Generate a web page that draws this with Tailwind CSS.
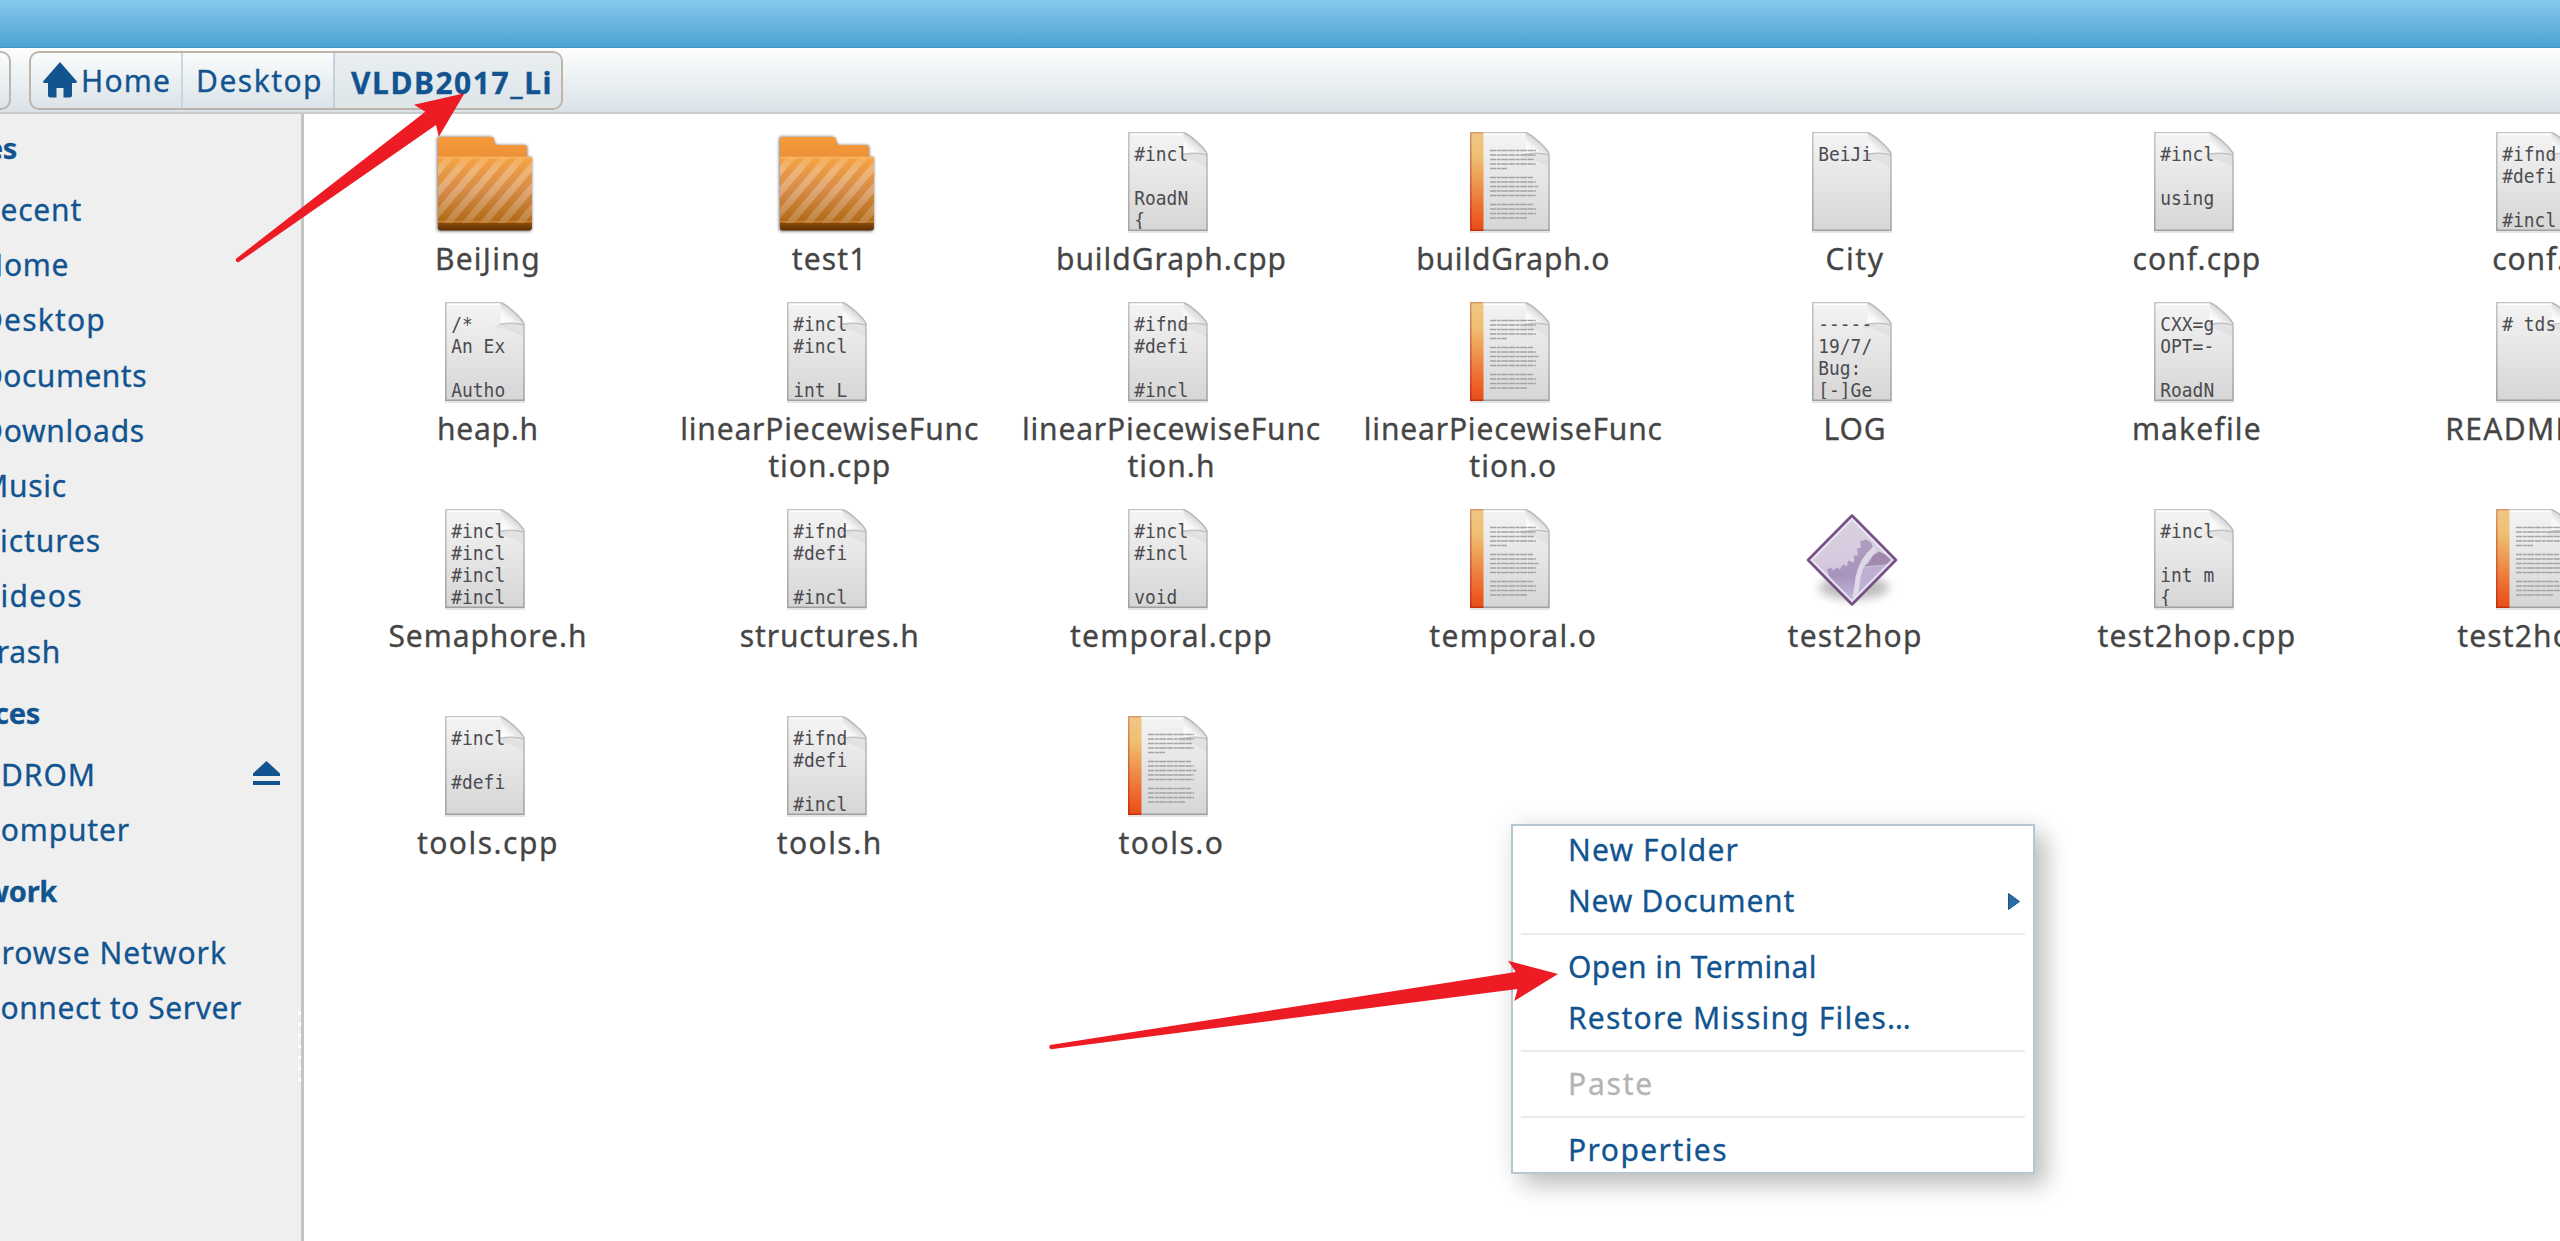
<!DOCTYPE html>
<html lang="en">
<head>
<meta charset="utf-8">
<title>VLDB2017_Li</title>
<script src="https://cdn.jsdelivr.net/npm/@tailwindcss/browser@4"></script>
</head>
<body class="relative flex h-[1241px] w-[2560px] flex-col overflow-hidden bg-white font-['Noto_Sans',sans-serif] text-[30px] text-[#12548f] [-webkit-text-stroke:0.3px]">

<!-- shared gradients and symbols -->
<svg class="absolute size-0" aria-hidden="true">
  <defs>
    <linearGradient id="paper" x1="0" y1="0" x2="0" y2="1"><stop offset="0" stop-color="#f4f4f4"/><stop offset="1" stop-color="#d6d6d6"/></linearGradient>
    <linearGradient id="edge" x1="0" y1="0" x2="0" y2="1"><stop offset="0" stop-color="#c4c4c4"/><stop offset="1" stop-color="#a0a0a0"/></linearGradient>
    <linearGradient id="fold" x1="0" y1="1" x2="0.75" y2="0.25"><stop offset="0" stop-color="#ffffff"/><stop offset="0.4" stop-color="#f8f8f8"/><stop offset="1" stop-color="#c4c4c4"/></linearGradient>
    <linearGradient id="spine" x1="0" y1="0" x2="0" y2="1"><stop offset="0" stop-color="#f0c78a"/><stop offset="0.25" stop-color="#efc070"/><stop offset="0.9" stop-color="#ec5820"/><stop offset="1" stop-color="#e4501c"/></linearGradient>
    <linearGradient id="spineEdge" x1="0" y1="0" x2="0" y2="1"><stop offset="0" stop-color="#dc9a6a"/><stop offset="1" stop-color="#c8300c"/></linearGradient>
    <linearGradient id="front" x1="0" y1="0" x2="0" y2="1"><stop offset="0" stop-color="#f7a444"/><stop offset="0.5" stop-color="#d58b48"/><stop offset="1" stop-color="#ad6712"/></linearGradient>
    <linearGradient id="back" x1="0" y1="0" x2="0" y2="1"><stop offset="0" stop-color="#f79a3e"/><stop offset="1" stop-color="#e98f33"/></linearGradient>
    <linearGradient id="base" x1="0" y1="0" x2="0" y2="1"><stop offset="0" stop-color="#8a4c08"/><stop offset="1" stop-color="#5c2f04"/></linearGradient>
    <linearGradient id="stripe" x1="0" y1="0" x2="0" y2="1"><stop offset="0" stop-color="#fff" stop-opacity="0.12"/><stop offset="0.2" stop-color="#fff" stop-opacity="0.28"/><stop offset="1" stop-color="#fff" stop-opacity="0.18"/></linearGradient>
    <linearGradient id="gem" x1="0" y1="0" x2="0" y2="1"><stop offset="0" stop-color="#d8cfe0"/><stop offset="0.5" stop-color="#d6cbde"/><stop offset="1" stop-color="#bdaed4"/></linearGradient>
    <linearGradient id="gear" x1="0" y1="0" x2="0" y2="1"><stop offset="0" stop-color="#b09dbd"/><stop offset="0.55" stop-color="#a893bd"/><stop offset="1" stop-color="#c9bfe4"/></linearGradient>
    <clipPath id="page"><rect x="0" y="0" width="61" height="97"/></clipPath>
    <clipPath id="frontClip"><path d="M8.5 25h94v66h-94z"/></clipPath>
    <clipPath id="gemClip"><path d="M55 5 97 46.5 55 88 13 46.5z"/></clipPath>
    <filter id="soft" x="-30%" y="-60%" width="160%" height="220%"><feGaussianBlur stdDeviation="5"/></filter>
    <filter id="soft2" x="-10%" y="-10%" width="120%" height="120%"><feGaussianBlur stdDeviation="1.4"/></filter>
  </defs>
  <symbol id="sheet" viewBox="0 0 84 104" overflow="visible">
    <path d="M0 100h80" stroke="#000" stroke-opacity="0.1" stroke-width="2"/>
    <path d="M.8.8H56C62 3 77 16 79 22V98.2H.8z" fill="url(#paper)" stroke="url(#edge)" stroke-width="1.5"/>
    <path d="M2.3 2.3H55" stroke="#fff" stroke-width="1.5"/>
    <path d="M53 22C60 23 74 23 78.500 24V36C72 30 60 26 50 26z" fill="#000" fill-opacity="0.04"/>
    <path d="M55.500 1.2C60 3 76 15 78.600 22C73 20 62 20.5 55 21.5C56 14 56 8 55.500 1.2z" fill="url(#fold)"/>
    <path d="M54.500 22.300C62 21.3 73 21 78.600 23" fill="none" stroke="#a8a8a8" stroke-opacity=".6" stroke-width="1.6"/>
    <path d="M56 1C62 3 77 16 79 22" fill="none" stroke="#bcbcbc" stroke-width="1.4"/>
  </symbol>
</svg>

<!-- title bar -->
<header class="h-12 shrink-0 border-b border-[#4294c6] bg-linear-to-b from-[#86c9ec] to-[#4aa3d4]"></header>

<!-- location bar -->
<nav class="flex h-[66px] shrink-0 items-start border-b-2 border-[#c6cbcd] bg-linear-to-b from-[#fdfefe] to-[#d9e2e7] pt-[3px]">
  <div class="h-[59px] w-[11px] rounded-r-[10px] border-2 border-l-0 border-[#bdb5ac]"></div>
  <div class="ml-[18px] flex h-[59px] w-[534px] overflow-hidden rounded-[10px] border-2 border-[#bdb5ac] leading-[55px]">
    <div class="flex w-[152px] items-start border-r-2 border-[#cad7de] pl-3">
      <svg class="mt-[9px] h-[36px] w-[34px] shrink-0" viewBox="0 0 34 36" fill="#12548f"><path d="M17 0 34 19.500Q34 21 32 21H29V33Q29 35.500 26.500 35.500H20.500V26H13.500V35.500H7.500Q5 35.500 5 33V21H2Q0 21 0 19.500z"/></svg>
      <span class="ml-1 whitespace-nowrap" data-w="90">Home</span>
    </div>
    <div class="w-[152px] border-r-2 border-[#c3d2da] pl-[13px]"><span class="whitespace-nowrap" data-w="127">Desktop</span></div>
    <div class="flex-1 bg-[#dfe6ea]/60 pl-[16px] pt-0.5 font-bold"><span class="whitespace-nowrap" data-w="202" data-bold>VLDB2017_Li</span></div>
  </div>
</nav>

<div class="flex min-h-0 flex-1">
  <!-- places -->
  <aside class="relative w-[304px] shrink-0 overflow-hidden border-r-[3px] border-[#c4c4c4] bg-[#efefef] leading-[55.2px]" id="places"></aside>
  <!-- files -->
  <main class="min-w-0 flex-1 overflow-hidden bg-white">
    <div id="files" class="ml-[12px] mt-[18px] grid w-[2393px] grid-cols-[repeat(7,341.8px)] grid-rows-[170px_207.200px_207.200px_170px] text-[#454545]"></div>
  </main>
</div>

<!-- context menu -->
<div class="absolute left-[1511px] top-[824px] flex h-[350px] w-[524px] flex-col border-2 border-[#b5c8d2] bg-white leading-[51px] shadow-[12px_12px_22px_rgba(0,0,0,0.22),0_0_26px_rgba(0,0,0,0.08)]">
  <div class="h-[49px] shrink-0 leading-[48px] pl-[55px]"><span class="whitespace-nowrap" data-w="171">New Folder</span></div>
  <div class="flex h-[51px] shrink-0 items-center justify-between pl-[55px] pr-[13px]"><span class="whitespace-nowrap" data-w="227">New Document</span>
    <svg class="mt-0.5 h-[17px] w-[12px]" viewBox="0 0 12 17"><path d="M.5.5 11.5 8.5.5 16.5z" fill="#2d6ba3" stroke="#12548f"/></svg></div>
  <div class="mx-2 my-[6.500px] h-0.5 shrink-0 bg-[#e4ecf0]"></div>
  <div class="h-[51px] shrink-0 pl-[55px]"><span class="whitespace-nowrap" data-w="249">Open in Terminal</span></div>
  <div class="h-[51px] shrink-0 pl-[55px]"><span class="whitespace-nowrap" data-w="344">Restore Missing Files…</span></div>
  <div class="mx-2 my-[6.500px] h-0.5 shrink-0 bg-[#e4ecf0]"></div>
  <div class="h-[51px] shrink-0 pl-[55px] text-[#b4b4b4]"><span class="whitespace-nowrap" data-w="86">Paste</span></div>
  <div class="mx-2 my-[6.500px] h-0.5 shrink-0 bg-[#e4ecf0]"></div>
  <div class="h-[48px] shrink-0 pl-[55px]"><span class="whitespace-nowrap" data-w="160">Properties</span></div>
</div>

<!-- red pointers -->
<svg class="pointer-events-none absolute left-0 top-0 h-[1241px] w-[2560px]" viewBox="0 0 2560 1241" fill="#ed1c24">
  <path d="M464.500 93.300 414 104.700 425.300 111.700 236 258.700Q235 262.500 238.500 262.300L436 125 438.800 136.700z"/>
  <path d="M1558 974 1508 960.700 1515.700 972 1050 1045Q1048 1048 1051 1049.200L1517.500 989 1514.300 1001z"/>
</svg>

<script>
const places = [
  ['h', 'Places', 17],
  ['i', 'Recent', 82], ['i', 'Home', 69], ['i', 'Desktop', 106], ['i', 'Documents', 147], ['i', 'Downloads', 145],
  ['i', 'Music', 67], ['i', 'Pictures', 101], ['i', 'Videos', 83], ['i', 'Trash', 61],
  ['h', 'Devices', 40],
  ['e', 'CDROM', 96], ['i', 'Computer', 130],
  ['h', 'Network', 57],
  ['i', 'Browse Network', 227], ['i', 'Connect to Server', 242],
];
const eject = '<svg class="ml-auto mr-[21px] mt-[14px] h-[24px] w-[27px]" viewBox="0 0 27 24" fill="#12548f"><path d="M13.500 0 27 12.500V15H0V12.500z"/><path d="M0 20h27v4.200H0z"/></svg>';
document.getElementById('places').innerHTML = places.map(([k, t, right]) => k === 'h'
  ? `<div class="flex h-[68px] pt-[6px] text-[29px] font-bold"><div class="flex justify-end whitespace-nowrap" style="width:${right}px"><span class="tracking-[-0.3px]">${t}</span></div></div>`
  : `<div class="flex h-[55.2px]"><div class="flex shrink-0 justify-end whitespace-nowrap" style="width:${right}px"><span data-w="${right + 19}">${t}</span></div>${k === 'e' ? eject : ''}</div>`
).join('') + '<div class="absolute right-0 top-[898px] flex flex-col gap-2">' + '<i class="block h-[3px] w-[3px] bg-white"></i>'.repeat(7) + '</div>';

const sheet = '<use href="#sheet" width="84" height="104"/>';
const text = lines => `<svg class="h-[104px] w-[84px]" viewBox="0 0 84 104">${sheet}<g clip-path="url(#page)" font-family="DejaVu Sans Mono" font-size="20" fill="#4b4b50">${
  lines.map((l, i) => l ? `<text xml:space="preserve" transform="translate(6.300 ${28.500 + 22 * i}) scale(.895 1)">${l}</text>` : '').join('')}</g></svg>`;
const rows = [[18,46],[22.5,46],[27,44],[31.5,46],[36,17],[45,43],[49.5,46],[54,48.5],[58.5,46],[63,46],[72,43],[76.5,46],[81,46],[85.5,37]];
const object = () => `<svg class="h-[104px] w-[84px]" viewBox="0 0 84 104">${sheet}
  <path d="M0 0h13.500v99H0z" fill="url(#spine)"/><path d="M13 .8H.8V98.2H13" fill="none" stroke="url(#spineEdge)" stroke-width="1.6"/>
  ${rows.map(([y, w]) => `<path d="M20 ${y + 0.5}h${w}" stroke="#a3a3a3" stroke-width="1.7" stroke-dasharray="6 .7 4 .6 7 .6"/>`).join('')}</svg>`;
const folder = () => `<svg class="h-[104px] w-[110px]" viewBox="2.6 0 110 104">
  <path d="M7.500 7Q7.500 4.500 10 4.500H62L67 13H95Q98 13 98 16V25H102.500V97Q102 99.500 99 99.500H11Q7.500 99.500 7.500 97z" fill="#000" fill-opacity=".5" filter="url(#soft2)"/>
  <path d="M8.500 7.500Q8.500 5 11 5H62Q65 5 65 8V10Q65 13 68 13H94Q97.500 13 97.500 16V30H8.500z" fill="url(#back)"/>
  <path d="M8.500 25H102.500V92H8.500z" fill="url(#front)"/>
  <g clip-path="url(#frontClip)" fill="url(#stripe)">${[-52,-34,-16,2,20,38,56,74,92,110].map(x => `<path d="M${x + 50} 25h9L${x + 2} 92h-9z"/>`).join('')}</g>
  <path d="M8.500 25.500h94" stroke="#f9b563" stroke-width="1.5"/><path d="M8.500 89.500h94" stroke="#c58743" stroke-width="1.2"/>
  <path d="M8.500 91H102.500V95.500Q102.500 98.500 99.500 98.500H11.500Q8.500 98.500 8.500 95.500z" fill="url(#base)"/></svg>`;
const program = () => `<svg class="h-[104px] w-[110px]" viewBox="2 -4.500 110 104" overflow="visible">
  <ellipse cx="57" cy="74" rx="35" ry="12" fill="#000" fill-opacity=".26" filter="url(#soft)"/>
  <path d="M55 1.500 99.500 46.500 55 91.500 10.500 46.500z" fill="url(#gem)"/>
  <g clip-path="url(#gemClip)">
    <path d="M30 56 34 54 36 57 40 54 43 56 46 51 50 53 51 47 57 49 57 42 61 42 60 35 64 34 63 28 69 26 74 29 76 34 70 40C64 50 59 62 57 92L34 68z" fill="url(#gear)"/>
    <path d="M71 50 76 42 82 38 99 46 99 50 66 53z" fill="#a18aae"/>
    <path d="M66 54 98 50 57 95 62 78 60 72 64 68 61 62z" fill="#bfafd3"/>
    <path d="M78 35C67 44 63 54 61 64 60 72 60 78 57 84" fill="none" stroke="#dfd8e8" stroke-width="5"/>
  </g>
  <path d="M55 5.500 95.500 46.500 55 87.500 14.500 46.500z" fill="none" stroke="#efe9f3" stroke-width="2.2" stroke-opacity=".85"/>
  <path d="M55 2 99 46.500 55 91 11 46.500z" fill="none" stroke="#745085" stroke-width="2.5" stroke-linejoin="round"/></svg>`;

const files = [
  [folder(), ['BeiJing', 106]], [folder(), ['test1', 76]],
  [text(['#incl', '', 'RoadN', '{']), ['buildGraph.cpp', 231]], [object(), ['buildGraph.o', 194]],
  [text(['BeiJi']), ['City', 59]], [text(['#incl', '', 'using']), ['conf.cpp', 129]], [text(['#ifnd', '#defi', '', '#incl']), ['conf.h', 93]],
  [text(['/*', 'An Ex', '', 'Autho']), ['heap.h', 102]], [text(['#incl', '#incl', '', 'int L']), ['linearPiecewiseFunc', 299], ['tion.cpp', 123]],
  [text(['#ifnd', '#defi', '', '#incl']), ['linearPiecewiseFunc', 299], ['tion.h', 88]], [object(), ['linearPiecewiseFunc', 299], ['tion.o', 88]],
  [text(['-----', '19/7/', 'Bug:', '[-]Ge']), ['LOG', 63]], [text(['CXX=g', 'OPT=-', '', 'RoadN']), ['makefile', 130]], [text(['# tds']), ['README.md', 187]],
  [text(['#incl', '#incl', '#incl', '#incl']), ['Semaphore.h', 199]], [text(['#ifnd', '#defi', '', '#incl']), ['structures.h', 180]],
  [text(['#incl', '#incl', '', 'void']), ['temporal.cpp', 203]], [object(), ['temporal.o', 168]], [program(), ['test2hop', 135]],
  [text(['#incl', '', 'int m', '{']), ['test2hop.cpp', 199]], [object(), ['test2hop.o', 163]],
  [text(['#incl', '', '#defi']), ['tools.cpp', 142]], [text(['#ifnd', '#defi', '', '#incl']), ['tools.h', 106]], [object(), ['tools.o', 106]],
];
document.getElementById('files').innerHTML = files.map(([icon, ...label]) =>
  `<figure class="flex flex-col items-center"><div class="h-[107.5px]">${icon}</div><figcaption class="flex flex-col items-center pl-[2px] leading-[37.3px]">${
    label.map(([t, w]) => `<span class="whitespace-nowrap" data-w="${w}">${t}</span>`).join('')}</figcaption></figure>`).join('');

const pen = document.createElement('canvas').getContext('2d');
document.querySelectorAll('[data-w]').forEach(el => {
  pen.font = ('bold' in el.dataset ? 'bold ' : '') + '30px "Noto Sans"';
  const natural = pen.measureText(el.textContent).width;
  el.style.letterSpacing = ((el.dataset.w - natural) / el.textContent.length).toFixed(3) + 'px';
});
</script>
</body>
</html>
